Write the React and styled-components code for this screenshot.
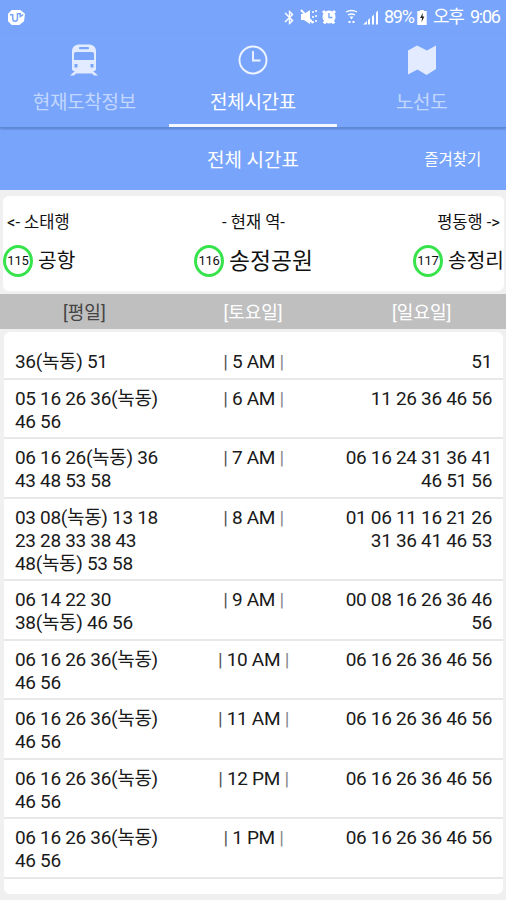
import styled, { createGlobalStyle } from 'styled-components';
import { MdBluetooth } from 'react-icons/md';

const hours = [
    { hour: '5 AM', week: ['36(녹동) 51'], sun: ['51'] },
    { hour: '6 AM', week: ['05 16 26 36(녹동)', '46 56'], sun: ['11 26 36 46 56'] },
    { hour: '7 AM', week: ['06 16 26(녹동) 36', '43 48 53 58'], sun: ['06 16 24 31 36 41', '46 51 56'] },
    { hour: '8 AM', week: ['03 08(녹동) 13 18', '23 28 33 38 43', '48(녹동) 53 58'], sun: ['01 06 11 16 21 26', '31 36 41 46 53'] },
    { hour: '9 AM', week: ['06 14 22 30', '38(녹동) 46 56'], sun: ['00 08 16 26 36 46', '56'] },
    { hour: '10 AM', week: ['06 16 26 36(녹동)', '46 56'], sun: ['06 16 26 36 46 56'] },
    { hour: '11 AM', week: ['06 16 26 36(녹동)', '46 56'], sun: ['06 16 26 36 46 56'] },
    { hour: '12 PM', week: ['06 16 26 36(녹동)', '46 56'], sun: ['06 16 26 36 46 56'] },
    { hour: '1 PM', week: ['06 16 26 36(녹동)', '46 56'], sun: ['06 16 26 36 46 56'] },
]

const stations = [
    { label: '<- 소태행', num: '115', name: '공항', align: 'flex-start', size: 20.3 },
    { label: '- 현재 역-', num: '116', name: '송정공원', align: 'center', size: 22.8 },
    { label: '평동행 ->', num: '117', name: '송정리', align: 'flex-end', size: 20.3 },
]

// mute, alarm, wifi, signal
const StatusIcons = () => (
    <svg width="82" height="20" viewBox="298 0 82 20" fill="#fff">
        <path d="M301 7h3l6-4v14l-6-4h-3z" />
        <path d="M301 3l12 13" stroke="#fff" strokeWidth="2" />
        <path d="M313 4v2m0 3v2m0 3v2M316 3v2m0 3v2m0 3v2" stroke="#fff" strokeWidth="1.500" />
        <circle cx="329" cy="10" r="6.500" />
        <path d="M323 4l2.500 2.500M335 4l-2.500 2.500M324 16.500l2-3M334 16.500l-2-3" stroke="#fff" strokeWidth="3" />
        <path d="M329 6v4.500h3.500" stroke="#78a5fb" strokeWidth="1.400" fill="none" />
        <path d="M346 5q5.500-3 11 0M348 8q3.500-2 7 0" stroke="#fff" strokeWidth="1.300" fill="none" />
        <path d="M349.500 9.500h4l-2 3zM348.500 14h2v2h-2zM352.500 14h2v2h-2z" />
        <path d="M363 17.500l4-3.500v3.500zM368 13l2-2v6.500h-2zM372 9.500l2-2v10h-2zM376 5.500l2-2v14h-2z" />
    </svg>
)

const TrainIcon = () => (
    <svg width="34" height="39" viewBox="0 0 34 39">
        <path d="M9 30h16l6 5.500h-4L25 33.500H9L7 35.500H3z" fill="currentColor" />
        <path d="M11 4.500h12q5.500 1 6 6V29q0 2-2 2H7q-2 0-2-2V10.500q.5-5 6-6z" fill="currentColor" />
        <rect x="12" y="7" width="10" height="2.200" rx="1" fill="#78a5fb" />
        <path d="M9 12h16q2 0 2 2v6H7v-6q0-2 2-2z" fill="#78a5fb" />
        <rect x="7.500" y="24" width="3" height="3.500" fill="#78a5fb" />
        <rect x="23.500" y="24" width="3" height="3.500" fill="#78a5fb" />
    </svg>
)

const App = () => {
    return (
        <>
            <GlobalStyle />
            <Screen>
                <StatusBar>
                    <svg width="19" height="17" viewBox="0 0 20 18">
                        <path d="M5 1h9l5 4-1 8-5 4H5l-4-4V5z" fill="#fff" />
                        <path d="M3 6h3v4q0 3 2.500 3t2.500-3V5h3v3l3-2" fill="none" stroke="#78a5fb" strokeWidth="1.600" />
                    </svg>
                    <StatusRight>
                        <MdBluetooth size={17} />
                        <StatusIcons />
                        <StatusText $w={31} $ml={4}>89%</StatusText>
                        <Battery viewBox="0 0 10 17">
                            <path d="M3 1h4v1h3v15H0V2h3z" fill="#fff" />
                            <path d="M6 4L3 9.500h2L4.500 14l3-6h-2z" fill="#222" />
                        </Battery>
                        <StatusText $w={34} $ml={6}>오후</StatusText>
                        <StatusText $w={30} $ml={3}>9:06</StatusText>
                    </StatusRight>
                </StatusBar>

                <Tabs>
                    <Tab>
                        <TrainIcon />
                        <span>현재도착정보</span>
                    </Tab>
                    <Tab $active>
                        <svg width="34" height="39" viewBox="0 0 34 39" fill="none" stroke="currentColor" strokeWidth="1.900">
                            <circle cx="17" cy="20" r="13.500" />
                            <path d="M17 11v9.500h7.500" />
                        </svg>
                        <span>전체시간표</span>
                    </Tab>
                    <Tab>
                        <svg width="34" height="39" viewBox="0 0 34 39" fill="currentColor">
                            <path d="M3 10.500l9-5 10 5 9-5V29l-9.500 6-9-5.500L3 34.500z" />
                        </svg>
                        <span>노선도</span>
                    </Tab>
                </Tabs>

                <TitleBar>
                    <span />
                    <Title>전체 시간표</Title>
                    <Favorite>즐겨찾기</Favorite>
                </TitleBar>

                <StationCard>
                    {stations.map((s) => (
                        <Station key={s.num} $align={s.align}>
                            <Direction>{s.label}</Direction>
                            <StationName $size={s.size}>
                                <StationNum>{s.num}</StationNum>
                                {s.name}
                            </StationName>
                        </Station>
                    ))}
                </StationCard>

                <DayBar>
                    <Day $selected>[평일]</Day>
                    <Day>[토요일]</Day>
                    <Day>[일요일]</Day>
                </DayBar>

                <TimeCard>
                    {hours.map((row) => (
                        <Row key={row.hour}>
                            <Times>{row.week.map((t) => <p key={t}>{t}</p>)}</Times>
                            <Hour><Bar $color="#555">|</Bar> {row.hour} <Bar $color="#888">|</Bar></Hour>
                            <Times $right>{row.sun.map((t) => <p key={t}>{t}</p>)}</Times>
                        </Row>
                    ))}
                </TimeCard>
            </Screen>
        </>
    );
}

export default App;


const GlobalStyle = createGlobalStyle`
    * { box-sizing: border-box; }
    body {
        margin: 0;
        background: #f0f0f0;
        font-family: Roboto, "Noto Sans CJK KR", sans-serif;
    }
    p { margin: 0; }
    svg { flex: none; }
`;
const Screen = styled.div`
    width: 506px;
    height: 900px;
    overflow: hidden;
    background: #f0f0f0;
`;
const StatusBar = styled.div`
    height: 34px;
    padding: 0 6px 0 7px;
    display: flex;
    align-items: center;
    justify-content: space-between;
    background: #78a5fb;
    color: #fff;
`;
const StatusRight = styled.div`
    display: flex;
    align-items: center;
`;
const StatusText = styled.span`
    width: ${(p) => p.$w}px;
    margin-left: ${(p) => p.$ml}px;
    font-size: 18px;
    line-height: 20px;
    letter-spacing: -1.3px;
    white-space: nowrap;
`;
const Battery = styled.svg`
    width: 10px;
    height: 16px;
    margin-left: 2px;
`;
const Tabs = styled.div`
    height: 94px;
    display: flex;
    background: #78a5fb;
    border-bottom: 1px solid #5f88d3;
    box-shadow: 0 1px 2px rgba(40,70,130,0.4);
    position: relative;
`;
const Tab = styled.div`
    flex: 1;
    display: flex;
    flex-direction: column;
    align-items: center;
    padding-top: 6px;
    color: ${(p) => p.$active ? '#eef4ff' : '#e2ebff'};
    border-bottom: 3px solid ${(p) => p.$active ? '#f4f7ff' : 'transparent'};

    span {
        margin-top: 11px;
        font-size: 19px;
        line-height: 26px;
        letter-spacing: -0.3px;
        color: ${(p) => p.$active ? '#fff' : '#c3d7fe'};
    }
`;
const TitleBar = styled.div`
    height: 62px;
    padding-bottom: 2px;
    display: grid;
    grid-template-columns: 1fr 1fr 1fr;
    align-items: center;
    justify-items: center;
    background: #78a5fb;
    color: #fff;
`;
const Title = styled.div`
    font-size: 19px;
`;
const Favorite = styled.div`
    font-size: 15.500px;
    padding-left: 62px;
`;
const StationCard = styled.div`
    height: 95px;
    margin: 6px 2px 3px 3px;
    padding-top: 16px;
    display: flex;
    background: #fff;
    border-radius: 6px;
    color: #111;
`;
const Station = styled.div`
    flex: 1;
    display: flex;
    flex-direction: column;
    align-items: ${(p) => p.$align};
`;
const Direction = styled.div`
    padding: 0 4px;
    font-size: 16.500px;
    line-height: 22px;
`;
const StationName = styled.div`
    display: flex;
    align-items: center;
    gap: 5px;
    margin-top: 11px;
    font-size: ${(p) => p.$size}px;
    line-height: 35px;
    height: 32px;
    white-space: nowrap;
`;
const StationNum = styled.div`
    width: 30px;
    height: 32px;
    border: 3px solid #36e34a;
    border-radius: 50%;
    font-size: 13px;
    line-height: 26px;
    text-align: center;
    letter-spacing: -0.2px;
`;
const DayBar = styled.div`
    height: 35px;
    padding-bottom: 2px;
    display: flex;
    align-items: center;
    background: #bfbfbf;
`;
const Day = styled.div`
    flex: 1;
    text-align: center;
    font-size: 18px;
    color: ${(p) => p.$selected ? '#444' : '#fff'};
`;
const TimeCard = styled.div`
    height: 562px;
    margin: 3px 3px 0 4px;
    padding-top: 11.500px;
    background: #fff;
    border-radius: 6px;
    color: #1a1a1a;
`;
const Row = styled.div`
    display: grid;
    grid-template-columns: 1fr 90px 1fr;
    padding: 6.900px 11px 4.200px;
    border-bottom: 2px solid #e8e8e8;
    font-size: 19px;
    line-height: 23.200px;
    letter-spacing: -0.32px;

    p {
        height: 23.200px;
        white-space: nowrap;
    }
`;
const Times = styled.div`
    text-align: ${(p) => p.$right ? 'right' : 'left'};
`;
const Hour = styled.div`
    text-align: center;
    white-space: nowrap;
`;
const Bar = styled.span`
    color: ${(p) => p.$color};
`;
